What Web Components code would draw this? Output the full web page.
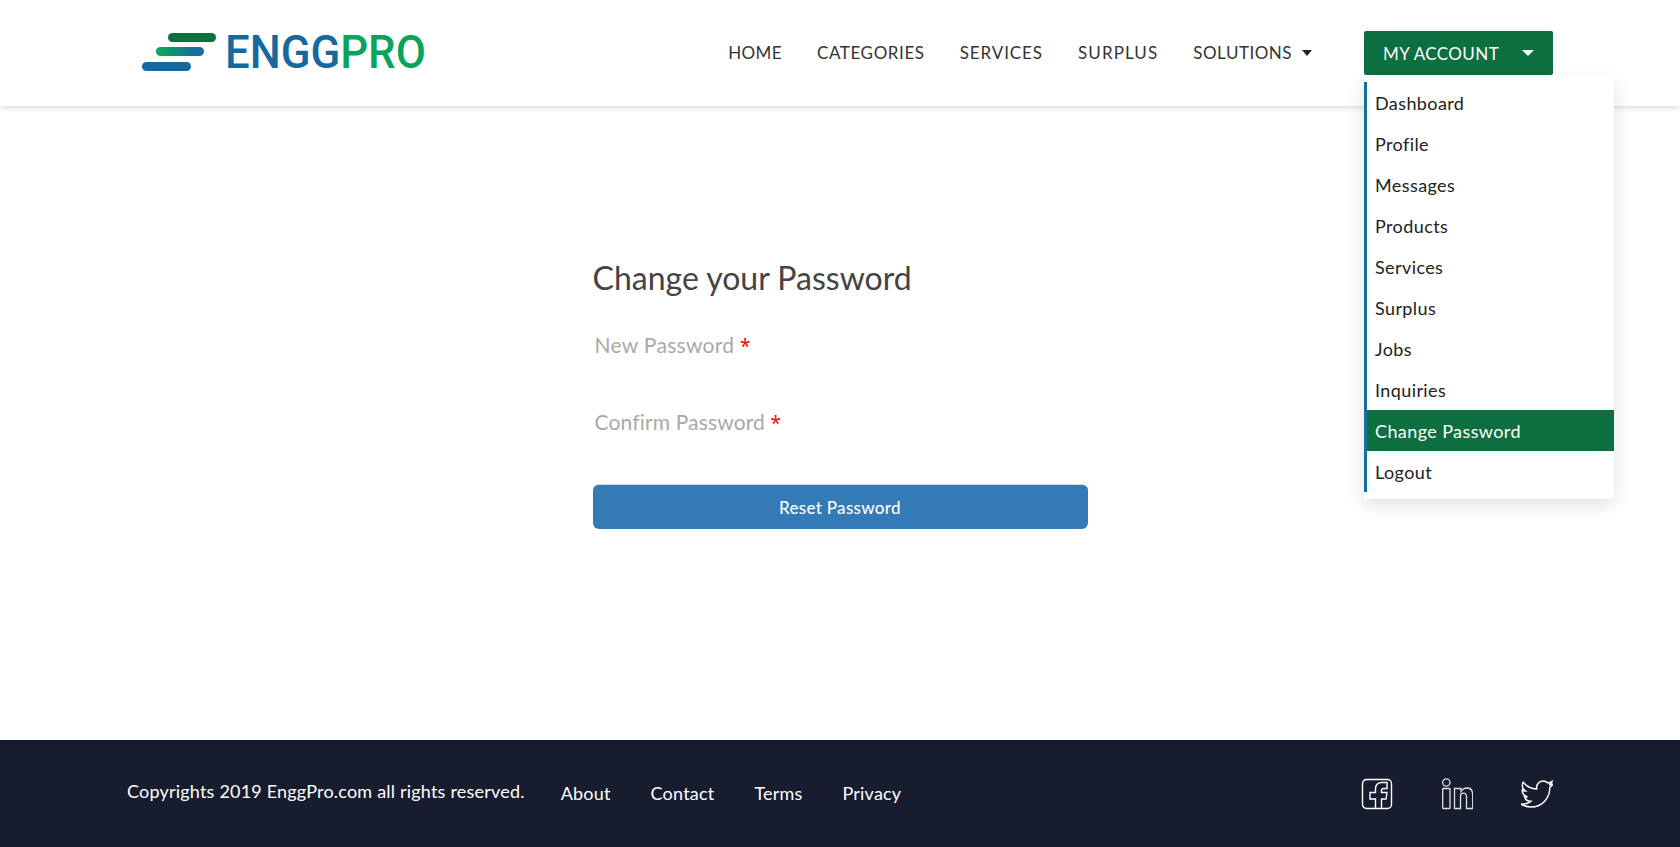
<!DOCTYPE html>
<html>
<head>
<meta charset="utf-8">
<title>EnggPro</title>
<style>
  html, body { margin: 0; height: 100%; }
  body {
    display: flex;
    flex-direction: column;
    min-height: 847px;
    font-family: Lato, "Noto Sans", sans-serif;
    background: #fff;
    overflow: hidden;
  }
  ep-main { flex: 1; }
</style>
</head>
<body>
<ep-header>
  <ep-nav-link style="letter-spacing:.4px">HOME</ep-nav-link>
  <ep-nav-link>CATEGORIES</ep-nav-link>
  <ep-nav-link style="letter-spacing:.9px">SERVICES</ep-nav-link>
  <ep-nav-link style="letter-spacing:1.1px">SURPLUS</ep-nav-link>
  <ep-nav-link caret style="letter-spacing:.5px">SOLUTIONS</ep-nav-link>
  <ep-account slot="account">
    <ep-menu-item>Dashboard</ep-menu-item>
    <ep-menu-item>Profile</ep-menu-item>
    <ep-menu-item>Messages</ep-menu-item>
    <ep-menu-item>Products</ep-menu-item>
    <ep-menu-item>Services</ep-menu-item>
    <ep-menu-item>Surplus</ep-menu-item>
    <ep-menu-item>Jobs</ep-menu-item>
    <ep-menu-item>Inquiries</ep-menu-item>
    <ep-menu-item active>Change Password</ep-menu-item>
    <ep-menu-item>Logout</ep-menu-item>
  </ep-account>
</ep-header>
<ep-main>
  <ep-password-form></ep-password-form>
</ep-main>
<ep-footer></ep-footer>

<script>
class EpHeader extends HTMLElement {
  constructor() {
    super();
    this.attachShadow({ mode: 'open' });
    this.shadowRoot.innerHTML = `
      <style>
        :host {
          display: block;
          position: relative;
          z-index: 2;
          background: #fff;
          box-shadow: 0 1px 6px rgba(0,0,0,0.18);
        }
        .bar {
          height: 106px;
          box-sizing: border-box;
          padding: 0 127px 0 142px;
          display: flex;
          align-items: center;
        }
        .logo { display: flex; align-items: center; gap: 9px; margin-top: -2px; }
        .logo svg { display: block; }
        .name {
          font: 500 46px/46px Roboto, sans-serif;
          color: #15699f;
          transform: scaleX(.95);
          transform-origin: left center;
        }
        .name span { color: #0aa35c; }
        nav {
          margin-left: auto;
          display: flex;
          align-items: center;
          gap: 35px;
        }
        .account { margin-left: 52px; }
      </style>
      <div class="bar">
        <div class="logo">
          <svg width="74" height="38" viewBox="0 0 74 38">
            <defs>
              <linearGradient id="mid"><stop offset="0.1" stop-color="#0aa35c"/><stop offset="0.8" stop-color="#14709f"/></linearGradient>
            </defs>
            <rect x="26" y="0" width="48" height="9" rx="4.5" fill="#0d6f3f"/>
            <rect x="14" y="14" width="48" height="9" rx="4.5" fill="url(#mid)"/>
            <rect x="0" y="29" width="49" height="9" rx="4.5" fill="#15699f"/>
          </svg>
          <div class="name">ENGG<span>PRO</span></div>
        </div>
        <nav><slot></slot></nav>
        <div class="account"><slot name="account"></slot></div>
      </div>
    `;
  }
}

class EpNavLink extends HTMLElement {
  constructor() {
    super();
    this.attachShadow({ mode: 'open' });
    const caret = this.hasAttribute('caret')
      ? '<span class="caret"></span>' : '';
    this.shadowRoot.innerHTML = `
      <style>
        :host {
          display: flex;
          align-items: center;
          font-size: 17px;
          letter-spacing: 0.6px;
          color: #333;
          line-height: 24px;
          margin-top: -1px;
        }
        .caret {
          margin-left: 10px;
          border: 5px solid transparent;
          border-top: 6px solid #222;
          border-bottom: 0;
        }
      </style>
      <slot></slot>${caret}
    `;
  }
}

class EpAccount extends HTMLElement {
  constructor() {
    super();
    this.attachShadow({ mode: 'open' });
    this.shadowRoot.innerHTML = `
      <style>
        :host { display: block; position: relative; }
        .btn {
          width: 189px;
          height: 44px;
          box-sizing: border-box;
          padding: 0 19px;
          display: flex;
          align-items: center;
          justify-content: space-between;
          background: #0d6f3f;
          color: #fff;
          font-size: 17px;
          letter-spacing: 0.4px;
          border-radius: 2px;
        }
        .caret {
          border: 6px solid transparent;
          border-top: 6px solid #fff;
          border-bottom: 0;
        }
        .menu {
          position: absolute;
          top: 100%;
          left: 0;
          width: 250px;
          box-sizing: border-box;
          padding: 7px 0;
          background: #fff;
          border-radius: 3px;
          box-shadow: 0 6px 18px rgba(0,0,0,0.12);
        }
        .list { border-left: 3px solid #14709f; }
      </style>
      <div class="btn"><span>MY ACCOUNT</span><span class="caret"></span></div>
      <div class="menu"><div class="list"><slot></slot></div></div>
    `;
  }
}

class EpMenuItem extends HTMLElement {
  constructor() {
    super();
    this.attachShadow({ mode: 'open' });
    this.shadowRoot.innerHTML = `
      <style>
        :host {
          display: block;
          height: 41px;
          line-height: 42px;
          padding-left: 8px;
          font-size: 18px;
          letter-spacing: 0.4px;
          color: #222;
        }
        :host([active]) { background: #0d6f3f; color: #fff; }
      </style>
      <slot></slot>
    `;
  }
}

class EpPasswordForm extends HTMLElement {
  constructor() {
    super();
    this.attachShadow({ mode: 'open' });
    this.shadowRoot.innerHTML = `
      <style>
        :host {
          display: block;
          width: 495px;
          margin: 0 auto;
          padding-top: 149px;
        }
        h2 {
          margin: 0 0 31px;
          font-size: 32px;
          line-height: 46px;
          font-weight: 400;
          color: #444;
        }
        .field {
          height: 77px;
          box-sizing: border-box;
          padding-left: 2px;
          font-size: 21px;
          letter-spacing: 0.3px;
          line-height: 26px;
          color: #a9a9a9;
        }
        .field + .field { letter-spacing: 0.15px; }
        .field b {
          font: 400 19px/1 "Noto Sans", sans-serif;
          color: #f00;
        }
        button {
          display: block;
          width: 100%;
          height: 45px;
          margin-top: -2px;
          border: 0;
          border-top: 1px solid #ddd;
          border-radius: 6px;
          background: #337ab7;
          color: #fff;
          font: 500 17px Lato, sans-serif;
          letter-spacing: 0.3px;
        }
      </style>
      <h2>Change your Password</h2>
      <div class="field">New Password <b>*</b></div>
      <div class="field">Confirm Password <b>*</b></div>
      <button>Reset Password</button>
    `;
  }
}

class EpFooter extends HTMLElement {
  constructor() {
    super();
    this.attachShadow({ mode: 'open' });
    this.shadowRoot.innerHTML = `
      <style>
        :host {
          display: block;
          background: #181c2f;
          color: #fff;
          font-size: 18px;
          letter-spacing: 0.2px;
        }
        .bar {
          height: 107px;
          box-sizing: border-box;
          padding: 0 127px;
          display: flex;
          align-items: center;
        }
        .copy { margin-top: -6px; margin-right: 36px; }
        .links { display: flex; gap: 40px; margin-top: -2px; }
        .social { margin-left: auto; display: flex; gap: 48px; }
        svg { display: block; fill: none; stroke: #fff; stroke-width: 1.4; }
      </style>
      <div class="bar">
        <span class="copy">Copyrights 2019 EnggPro.com all rights reserved.</span>
        <div class="links"><span>About</span><span>Contact</span><span>Terms</span><span>Privacy</span></div>
        <div class="social">
          <svg width="32" height="32" viewBox="0 0 32 32">
            <rect x="1.5" y="1.5" width="29" height="29" rx="4"/>
            <path d="M14.5 30.5V21H9V14.5H14.5V11C14.5 6.5 17 4.5 21 4.5H26V10.5H22.5C21 10.5 20.5 11 20.5 12.5V14.5H26L25 21H20.5V30.5"/>
          </svg>
          <svg width="32" height="32" viewBox="0 0 32 32" style="stroke:#e0e1e5;stroke-width:1.3">
            <circle cx="5.3" cy="4.5" r="3.7"/>
            <rect x="1.7" y="10.5" width="7.3" height="20" rx="0.5"/>
            <path d="M13.5 10.5h6.5v3c1.5-2.5 4-3.5 6-3.5 4 0 5.7 3 5.7 7v13.5h-6.2V18.5c0-2-1-3.3-3-3.3s-3 1.3-3 3.3v12h-6z"/>
          </svg>
          <svg width="32" height="32" viewBox="0 0 24 24" style="stroke-width:1.1">
            <path d="M23.954 4.569c-.885.389-1.83.654-2.825.775 1.014-.611 1.794-1.574 2.163-2.723-.951.555-2.005.959-3.127 1.184-.896-.959-2.173-1.559-3.591-1.559-2.717 0-4.92 2.203-4.92 4.917 0 .39.045.765.127 1.124C7.691 8.094 4.066 6.13 1.64 3.161c-.427.722-.666 1.561-.666 2.475 0 1.71.87 3.213 2.188 4.096-.807-.026-1.566-.248-2.228-.616v.061c0 2.385 1.693 4.374 3.946 4.827-.413.111-.849.171-1.296.171-.314 0-.615-.03-.916-.086.631 1.953 2.445 3.377 4.604 3.417-1.68 1.319-3.809 2.105-6.102 2.105-.39 0-.779-.023-1.17-.067 2.189 1.394 4.768 2.209 7.557 2.209 9.054 0 13.999-7.496 13.999-13.986 0-.209 0-.42-.015-.63.961-.689 1.8-1.56 2.46-2.548l-.047-.02z"/>
          </svg>
        </div>
      </div>
    `;
  }
}

customElements.define('ep-header', EpHeader);
customElements.define('ep-nav-link', EpNavLink);
customElements.define('ep-account', EpAccount);
customElements.define('ep-menu-item', EpMenuItem);
customElements.define('ep-password-form', EpPasswordForm);
customElements.define('ep-footer', EpFooter);
</script>
</body>
</html>
